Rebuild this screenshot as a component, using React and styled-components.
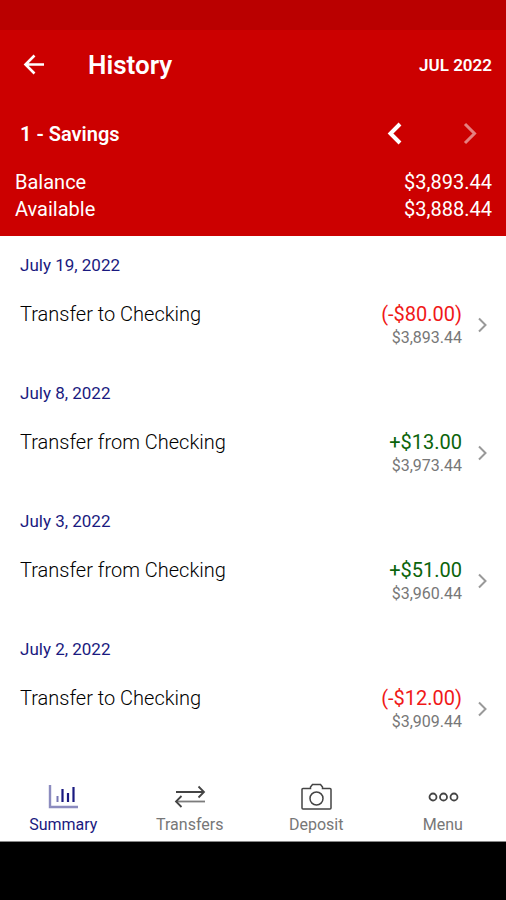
import React, { useState } from 'react';
import styled, { createGlobalStyle } from 'styled-components';

const transactions = [
    { id: 1, date: 'July 19, 2022', title: 'Transfer to Checking', amount: '(-$80.00)', balance: '$3,893.44', debit: true },
    { id: 2, date: 'July 8, 2022', title: 'Transfer from Checking', amount: '+$13.00', balance: '$3,973.44' },
    { id: 3, date: 'July 3, 2022', title: 'Transfer from Checking', amount: '+$51.00', balance: '$3,960.44' },
    { id: 4, date: 'July 2, 2022', title: 'Transfer to Checking', amount: '(-$12.00)', balance: '$3,909.44', debit: true },
];

const tabs = [
    { name: 'Summary', Icon: SummaryIcon },
    { name: 'Transfers', Icon: TransfersIcon },
    { name: 'Deposit', Icon: DepositIcon },
    { name: 'Menu', Icon: MenuIcon },
];

function BackIcon() {
    return (
        <svg width="24" height="24" viewBox="0 0 24 24" fill="none" stroke="currentColor" strokeWidth="2.6">
            <path d="M22 11.500H3.500M12.500 2.500l-9 9 9 9" />
        </svg>
    );
}

function Chevron({ left, weight = 4 }) {
    return (
        <svg width="16" height="24" viewBox="0 0 16 24" fill="none" stroke="currentColor" strokeWidth={weight}>
            <path d={left ? 'M14 2L4.500 11.500 14 21' : 'M3 2l9.500 9.500L3 21'} />
        </svg>
    );
}

function RowChevron() {
    return (
        <svg width="10" height="16" viewBox="0 0 10 16" fill="none" stroke="#999" strokeWidth="2">
            <path d="M1 1.500L7.500 8 1 14.500" />
        </svg>
    );
}

function SummaryIcon() {
    return (
        <svg width="32" height="28" viewBox="0 0 32 28" fill="none" stroke="currentColor">
            <path d="M3 2v22h28" strokeWidth="2.4" opacity="0.5" />
            <path d="M10.5 13v6" strokeWidth="2" opacity="0.6" />
            <path d="M15.500 6v13M21 10v9M26.500 4v15" strokeWidth="2.2" />
        </svg>
    );
}

function TransfersIcon() {
    return (
        <svg width="32" height="28" viewBox="0 0 32 28" fill="none" stroke="currentColor" strokeWidth="1.8">
            <path d="M2 9h28M24.500 3.500L30 9l-5.500 5.500" />
            <path d="M7.500 13L2 18.500 7.500 24" />
            <path d="M31 18.500H2" opacity="0.7" />
        </svg>
    );
}

function DepositIcon() {
    return (
        <svg width="32" height="28" viewBox="0 0 32 28" fill="none" stroke="currentColor" strokeWidth="1.5">
            <path d="M3 5.500h7.500V4l2-2.500h8l2 2.500v1.500H30a1 1 0 0 1 1 1V25a1 1 0 0 1-1 1H3a1 1 0 0 1-1-1V6.500a1 1 0 0 1 1-1z" />
            <circle cx="16.500" cy="15.500" r="6.500" />
        </svg>
    );
}

function MenuIcon() {
    return (
        <svg width="32" height="28" viewBox="0 0 32 28" fill="none" stroke="currentColor" strokeWidth="1.8">
            <circle cx="6" cy="14" r="3.500" />
            <circle cx="16.500" cy="14" r="3.500" />
            <circle cx="27" cy="14" r="3.500" />
        </svg>
    );
}

const App = () => {
    const [active, setActive] = useState('Summary');

    return (
        <>
            <GlobalStyle />
            <Screen>
                <StatusBar />
                <Header>
                    <TitleBar>
                        <IconButton aria-label="Back"><BackIcon /></IconButton>
                        <Title>History</Title>
                        <Month>JUL 2022</Month>
                    </TitleBar>
                    <AccountBar>
                        <AccountName>1 - Savings</AccountName>
                        <IconButton aria-label="Previous account"><Chevron left /></IconButton>
                        <IconButton aria-label="Next account" disabled><Chevron weight={3} /></IconButton>
                    </AccountBar>
                    <Totals>
                        <Total><dt>Balance</dt><dd>$3,893.44</dd></Total>
                        <Total><dt>Available</dt><dd>$3,888.44</dd></Total>
                    </Totals>
                </Header>
                <List>
                    {transactions.map((item) => (
                        <Entry key={item.id}>
                            <EntryDate>{item.date}</EntryDate>
                            <EntryButton>
                                <EntryTitle>{item.title}</EntryTitle>
                                <Figures>
                                    <Amount $debit={item.debit}>{item.amount}</Amount>
                                    <Running>{item.balance}</Running>
                                </Figures>
                                <RowChevron />
                            </EntryButton>
                        </Entry>
                    ))}
                </List>
                <TabBar>
                    {tabs.map(({ name, Icon }) => (
                        <Tab key={name} $active={active === name} onClick={() => setActive(name)}>
                            <Icon />
                            <span>{name}</span>
                        </Tab>
                    ))}
                </TabBar>
                <SystemBar />
            </Screen>
        </>
    );
};
export default App;

const GlobalStyle = createGlobalStyle`
    * {
        box-sizing: border-box;
    }
    body {
        margin: 0;
        background: #fff;
        font-family: Roboto, "Liberation Sans", sans-serif;
    }
    button {
        border: 0;
        padding: 0;
        background: none;
        color: inherit;
        font-family: inherit;
        cursor: pointer;
    }
    svg {
        display: block;
        flex-shrink: 0;
    }
`;

const Screen = styled.div`
    display: flex;
    flex-direction: column;
    min-height: 100vh;
`;

const StatusBar = styled.div`
    height: 30px;
    background: #ba0000;
`;

const Header = styled.header`
    padding-bottom: 13px;
    background: #cc0000;
    color: #fff;
`;

const TitleBar = styled.div`
    display: flex;
    align-items: center;
    height: 70px;
    padding: 0 14px 0 12px;
`;

const IconButton = styled.button`
    display: flex;
    align-items: center;
    justify-content: center;
    width: 44px;
    height: 44px;

    &:disabled {
        opacity: 0.5;
        cursor: default;
    }
`;

const Title = styled.h1`
    flex: 1;
    margin: 0;
    padding-left: 32px;
    font-size: 26px;
    line-height: 32px;
    font-weight: 600;
`;

const Month = styled.span`
    font-size: 17px;
    line-height: 24px;
    font-weight: 600;
`;

const AccountBar = styled.div`
    display: flex;
    align-items: center;
    gap: 32px;
    height: 68px;
    padding: 0 14px 0 20px;
`;

const AccountName = styled.h2`
    flex: 1;
    margin: 0;
    font-size: 20px;
    line-height: 24px;
    font-weight: 600;
`;

const Totals = styled.dl`
    margin: 0;
    padding: 1px 14px 0 15px;
`;

const Total = styled.div`
    display: flex;
    justify-content: space-between;
    font-size: 20px;
    line-height: 27px;
    font-weight: 400;

    dd {
        margin: 0;
    }
`;

const List = styled.ul`
    flex: 1;
    margin: 0;
    padding: 0;
    list-style: none;
`;

const Entry = styled.li`
    height: 128px;
    padding: 17px 18px 0 20px;
`;

const EntryDate = styled.div`
    color: #1a1a80;
    font-size: 17px;
    line-height: 24px;
`;

const EntryButton = styled.button`
    display: flex;
    align-items: center;
    width: 100%;
    margin-top: 24px;
    text-align: left;
`;

const EntryTitle = styled.span`
    flex: 1;
    align-self: flex-start;
    color: #000;
    font-size: 20px;
    line-height: 26px;
    font-weight: 300;
`;

const Figures = styled.span`
    display: flex;
    flex-direction: column;
    align-items: flex-end;
    margin-right: 16px;
`;

const Amount = styled.span`
    color: ${props => props.$debit ? '#f01818' : '#0b640b'};
    font-size: 20px;
    line-height: 26px;
`;

const Running = styled.span`
    color: #777;
    font-size: 16px;
    line-height: 21px;
`;

const TabBar = styled.nav`
    display: grid;
    grid-template-columns: repeat(4, 1fr);
    height: 73px;
    border-bottom: 1px solid #888;
    background: #fff;
`;

const Tab = styled.button`
    display: flex;
    flex-direction: column;
    align-items: center;
    gap: 5px;
    padding-top: 14px;
    color: ${props => props.$active ? '#1a1a80' : '#444'};
    font-size: 16px;
    line-height: 18px;

    span {
        color: ${props => props.$active ? '#1a1a80' : '#777'};
    }
`;

const SystemBar = styled.div`
    height: 58px;
    background: #000;
`;
